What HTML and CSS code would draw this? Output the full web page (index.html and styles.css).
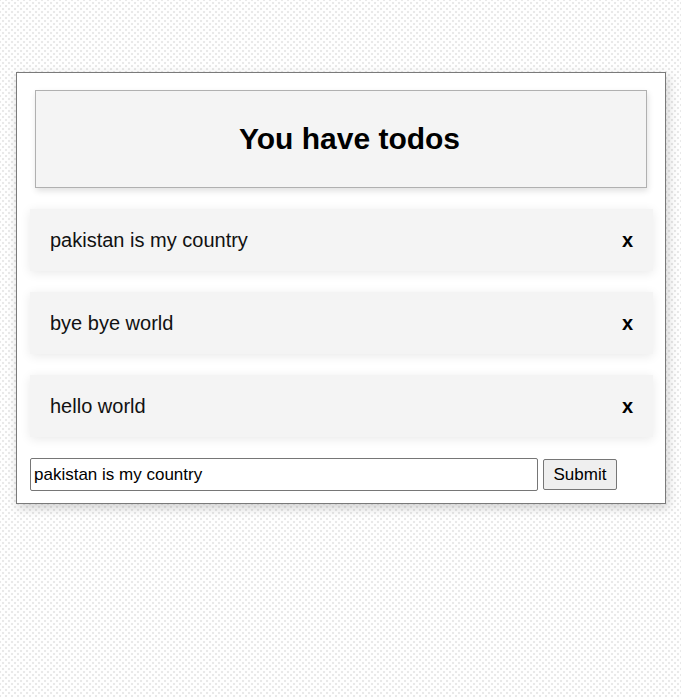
FILE: index.html
```html
<!DOCTYPE html>
<html>
<head>
<meta charset="utf-8">
<title>Todos</title>
<link rel="stylesheet" href="styles.css">
</head>
<body>
<div class="card">
  <div class="header"><h1 class="title">You have todos</h1></div>
  <ul class="list">
    <li class="item"><span class="text">pakistan is my country</span><span class="remove">x</span></li>
    <li class="item"><span class="text">bye bye world</span><span class="remove">x</span></li>
    <li class="item"><span class="text">hello world</span><span class="remove">x</span></li>
  </ul>
  <form class="form">
    <input class="field" type="text" value="pakistan is my country">
    <button class="submit" type="button">Submit</button>
  </form>
</div>
</body>
</html>
```

FILE: styles.css
```css
html, body {
  margin: 0;
  padding: 0;
}
body {
  min-height: 697px;
  background-color: #ffffff;
  background-image:
    radial-gradient(circle, #e9e9e9 1.1px, transparent 1.6px),
    radial-gradient(circle, #e9e9e9 1.1px, transparent 1.6px);
  background-size: 6px 6px;
  background-position: 0 0, 3px 3px;
  font-family: "Liberation Sans", Arial, sans-serif;
  padding: 72px 0 0 16px;
  box-sizing: border-box;
}
.card {
  width: 650px;
  box-sizing: border-box;
  background: #fff;
  border: 1px solid #7a7a7a;
  box-shadow: 2px 4px 10px rgba(0, 0, 0, 0.18);
  padding: 17px 12px 12px 13px;
  display: flex;
  flex-direction: column;
  gap: 21px;
}
.header {
  margin: 0 6px 0 5px;
  height: 98px;
  box-sizing: border-box;
  background: #f4f4f4;
  border: 1px solid #b0b0b0;
  box-shadow: 1px 3px 6px rgba(0, 0, 0, 0.12);
  display: flex;
  align-items: center;
  justify-content: center;
}
.title {
  margin: 0;
  padding-left: 17px;
  font-size: 30px;
  font-weight: bold;
  color: #000;
}
.list {
  list-style: none;
  margin: 0;
  padding: 0;
  display: flex;
  flex-direction: column;
  gap: 21px;
}
.item {
  height: 62px;
  background: #f4f4f4;
  box-shadow: 0 2px 10px rgba(0, 0, 0, 0.09);
  display: flex;
  align-items: center;
  justify-content: space-between;
  padding: 0 20px 0 20px;
  font-size: 20px;
  color: #111;
}
.remove {
  font-weight: bold;
  color: #000;
}
.form {
  display: flex;
  align-items: center;
  gap: 5px;
  margin: 0;
}
.field {
  width: 508px;
  height: 33px;
  box-sizing: border-box;
  border: 1px solid #767676;
  border-radius: 2px;
  padding: 1px 3px;
  font-family: "Liberation Sans", Arial, sans-serif;
  font-size: 17px;
  color: #000;
  background: #fff;
  margin: 0;
}
.submit {
  width: 74px;
  height: 31px;
  box-sizing: border-box;
  border: 1px solid #767676;
  border-radius: 2px;
  background: #efefef;
  padding: 0;
  font-family: "Liberation Sans", Arial, sans-serif;
  font-size: 17px;
  color: #000;
  margin: 0;
}
```
